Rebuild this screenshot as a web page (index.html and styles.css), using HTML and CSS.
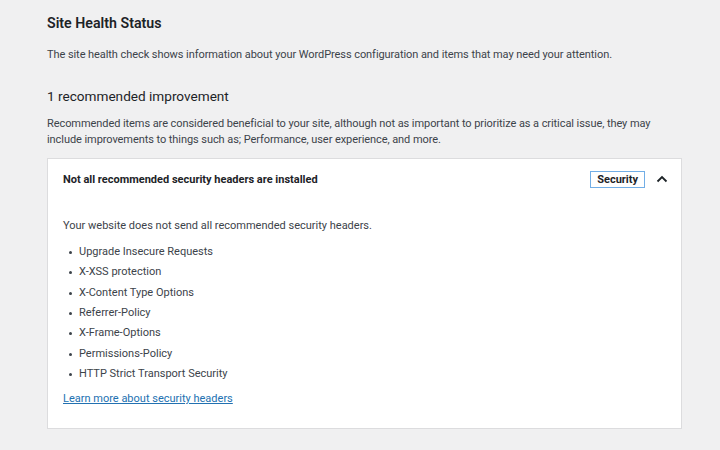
FILE: index.html
```html
<!DOCTYPE html>
<html>
<head>
<meta charset="utf-8">
<link rel="stylesheet" href="styles.css">
</head>
<body>
<div class="page">
  <h1 class="title">Site Health Status</h1>
  <p class="intro">The site health check shows information about your WordPress configuration and items that may need your attention.</p>
  <h2 class="subtitle">1 recommended improvement</h2>
  <p class="desc">Recommended items are considered beneficial to your site, although not as important to prioritize as a critical issue, they may include improvements to things such as; Performance, user experience, and more.</p>
  <div class="card">
    <div class="card-head">
      <span class="card-title">Not all recommended security headers are installed</span>
      <span class="badge">Security</span>
      <svg class="chev" width="12" height="8" viewBox="0 0 12 8"><path d="M1.5 6.5 L6 2 L10.5 6.5" fill="none" stroke="#1d2327" stroke-width="1.8"/></svg>
    </div>
    <div class="card-body">
      <p class="lead">Your website does not send all recommended security headers.</p>
      <ul class="list">
        <li>Upgrade Insecure Requests</li>
        <li>X-XSS protection</li>
        <li>X-Content Type Options</li>
        <li>Referrer-Policy</li>
        <li>X-Frame-Options</li>
        <li>Permissions-Policy</li>
        <li>HTTP Strict Transport Security</li>
      </ul>
      <a class="link" href="#">Learn more about security headers</a>
    </div>
  </div>
</div>
</body>
</html>
```
FILE: styles.css
```css
html, body {
  margin: 0;
  padding: 0;
  background: #f0f0f1;
}
body {
  font-family: Roboto, "Liberation Sans", sans-serif;
  color: #3c434a;
  width: 720px;
  height: 450px;
  overflow: hidden;
}
.page {
  padding: 13px 0 0 47px;
  width: 635px;
}
.title {
  margin: 0;
  font-size: 14.2px;
  line-height: 20px;
  font-weight: 600;
  color: #1d2327;
}
.intro {
  margin: 14px 0 0;
  font-size: 11px;
  line-height: 16px;
  letter-spacing: -0.07px;
}
.subtitle {
  margin: 23px 0 0;
  font-size: 13.6px;
  line-height: 20px;
  font-weight: 400;
  color: #1d2327;
}
.desc {
  margin: 10px 0 0;
  font-size: 11px;
  line-height: 16px;
  letter-spacing: -0.07px;
}
.card {
  margin-top: 10px;
  background: #fff;
  border: 1px solid #dcdcde;
}
.card-head {
  display: flex;
  align-items: center;
  height: 40px;
  padding: 0 13px 0 15px;
}
.card-title {
  flex: 1;
  font-size: 11px;
  font-weight: 700;
  color: #1d2327;
}
.badge {
  border: 1px solid #72aee6;
  font-size: 11px;
  font-weight: 700;
  line-height: 15px;
  padding: 0 6px;
  color: #1d2327;
  margin-right: 11px;
}
.chev {
  display: block;
}
.card-body {
  padding: 19px 15px 21px;
}
.lead {
  margin: 0;
  font-size: 11px;
  line-height: 16px;
}
.list {
  list-style: none;
  margin: 8px 0 7px;
  padding: 0 0 0 16px;
}
.list li {
  position: relative;
  font-size: 11px;
  line-height: 20.33px;
}
.list li::before {
  content: "";
  position: absolute;
  left: -10px;
  top: 9px;
  width: 3px;
  height: 3px;
  border-radius: 50%;
  background: #3c434a;
}
.link {
  display: block;
  font-size: 11px;
  line-height: 16px;
  color: #2271b1;
  text-decoration: underline;
}
```
